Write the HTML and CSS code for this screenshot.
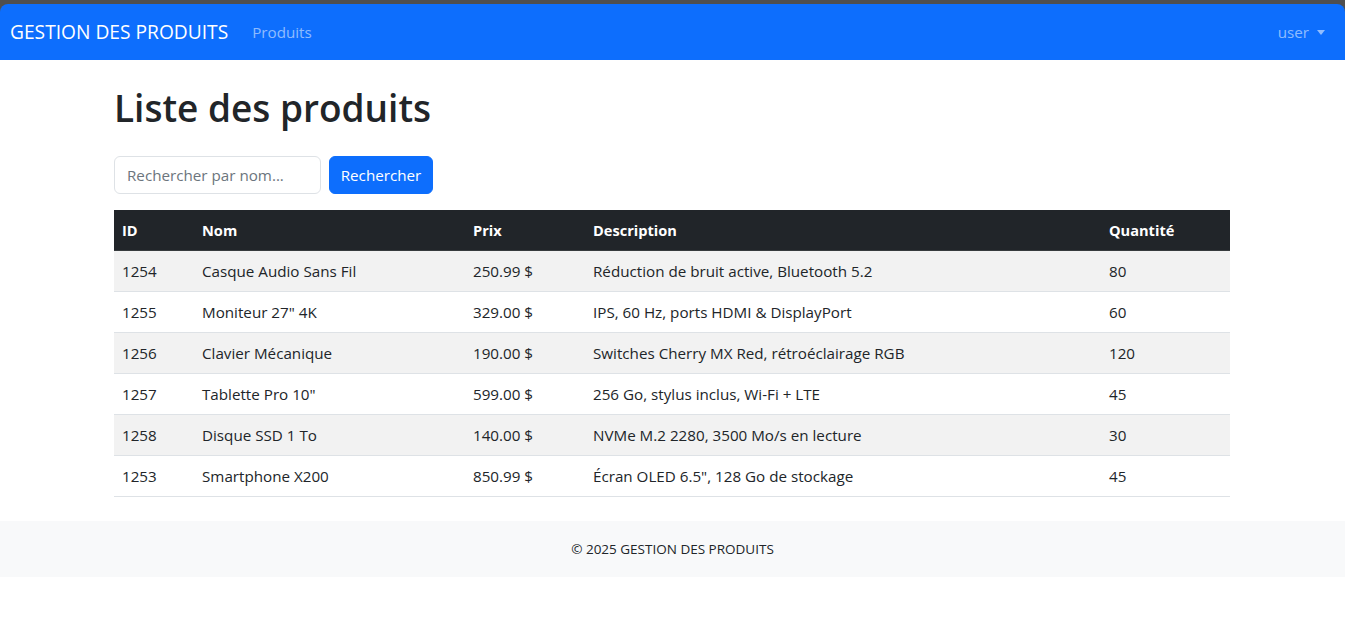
FILE: index.html
```html
<!DOCTYPE html>
<html lang="fr">
<head>
<meta charset="utf-8">
<title>Liste des produits</title>
<link rel="stylesheet" href="styles.css">
</head>
<body>
<header class="frame">
  <nav class="navbar">
    <div class="nav-left">
      <a class="brand" href="#">GESTION DES PRODUITS</a>
      <a class="nav-link" href="#">Produits</a>
    </div>
    <a class="nav-link dropdown" href="#">user<span class="caret"></span></a>
  </nav>
</header>
<main class="container">
  <h1 class="title">Liste des produits</h1>
  <form class="search">
    <input class="search-input" type="text" placeholder="Rechercher par nom...">
    <button class="btn" type="button">Rechercher</button>
  </form>
  <table class="table">
    <colgroup>
      <col class="c-id"><col class="c-nom"><col class="c-prix"><col class="c-desc"><col class="c-qte">
    </colgroup>
    <thead>
      <tr><th>ID</th><th>Nom</th><th>Prix</th><th>Description</th><th>Quantité</th></tr>
    </thead>
    <tbody>
      <tr><td>1254</td><td>Casque Audio Sans Fil</td><td>250.99 $</td><td>Réduction de bruit active, Bluetooth 5.2</td><td>80</td></tr>
      <tr><td>1255</td><td>Moniteur 27" 4K</td><td>329.00 $</td><td>IPS, 60 Hz, ports HDMI &amp; DisplayPort</td><td>60</td></tr>
      <tr><td>1256</td><td>Clavier Mécanique</td><td>190.00 $</td><td>Switches Cherry MX Red, rétroéclairage RGB</td><td>120</td></tr>
      <tr><td>1257</td><td>Tablette Pro 10"</td><td>599.00 $</td><td>256 Go, stylus inclus, Wi-Fi + LTE</td><td>45</td></tr>
      <tr><td>1258</td><td>Disque SSD 1 To</td><td>140.00 $</td><td>NVMe M.2 2280, 3500 Mo/s en lecture</td><td>30</td></tr>
      <tr><td>1253</td><td>Smartphone X200</td><td>850.99 $</td><td>Écran OLED 6.5", 128 Go de stockage</td><td>45</td></tr>
    </tbody>
  </table>
</main>
<footer class="footer">© 2025 GESTION DES PRODUITS</footer>
</body>
</html>
```

FILE: styles.css
```css
* { box-sizing: border-box; }
html, body {
  margin: 0;
  padding: 0;
  background: #ffffff;
}
body {
  font-family: "Open Sans", "Noto Sans", sans-serif;
  font-size: 15.2px;
  line-height: 24px;
  color: #212529;
}
.frame {
  padding-top: 4px;
  background: #4f4f4f;
}
.navbar {
  height: 56px;
  background: #0d6efd;
  border-radius: 8px 8px 0 0;
  display: flex;
  align-items: center;
  justify-content: space-between;
  padding: 0 12px 0 10px;
}
.nav-left {
  display: flex;
  align-items: center;
}
.brand {
  color: #ffffff;
  text-decoration: none;
  font-size: 19.2px;
  line-height: 30px;
  margin-right: 16px;
}
.nav-link {
  color: rgba(255, 255, 255, 0.55);
  text-decoration: none;
  padding: 8px;
  display: flex;
  align-items: center;
}
.caret {
  display: inline-block;
  margin-left: 8px;
  border-top: 5px solid rgba(255, 255, 255, 0.55);
  border-left: 4.5px solid transparent;
  border-right: 4.5px solid transparent;
}
.container {
  padding: 24px 115px 8px 114px;
}
.title {
  margin: 0 0 24px;
  font-size: 37px;
  font-weight: 600;
  line-height: 48px;
}
.search {
  display: flex;
  gap: 8px;
  margin-bottom: 16px;
}
.search-input {
  width: 207px;
  height: 38px;
  padding: 6px 12px;
  font: inherit;
  color: #212529;
  border: 1px solid #dee2e6;
  border-radius: 6px;
}
.search-input::placeholder { color: #6c757d; }
.btn {
  width: 104px;
  height: 38px;
  padding: 0;
  font: inherit;
  color: #ffffff;
  background: #0d6efd;
  border: 1px solid #0d6efd;
  border-radius: 6px;
}
.table {
  width: 100%;
  border-collapse: collapse;
  table-layout: fixed;
  margin-bottom: 16px;
}
.c-id { width: 80px; }
.c-nom { width: 271px; }
.c-prix { width: 120px; }
.c-desc { width: 516px; }
.c-qte { width: 129px; }
.table th, .table td {
  padding: 8px;
  text-align: left;
  line-height: 24px;
  border-bottom: 1px solid #dee2e6;
  white-space: nowrap;
}
.table thead th {
  background: #212529;
  color: #ffffff;
  font-weight: 700;
  font-size: 14.6px;
  border-bottom-color: #373b3e;
}
.table tbody tr:nth-child(odd) td { background: #f2f2f2; }
.footer {
  background: #f8f9fa;
  height: 56px;
  display: flex;
  align-items: center;
  justify-content: center;
  font-size: 13.5px;
}
```
